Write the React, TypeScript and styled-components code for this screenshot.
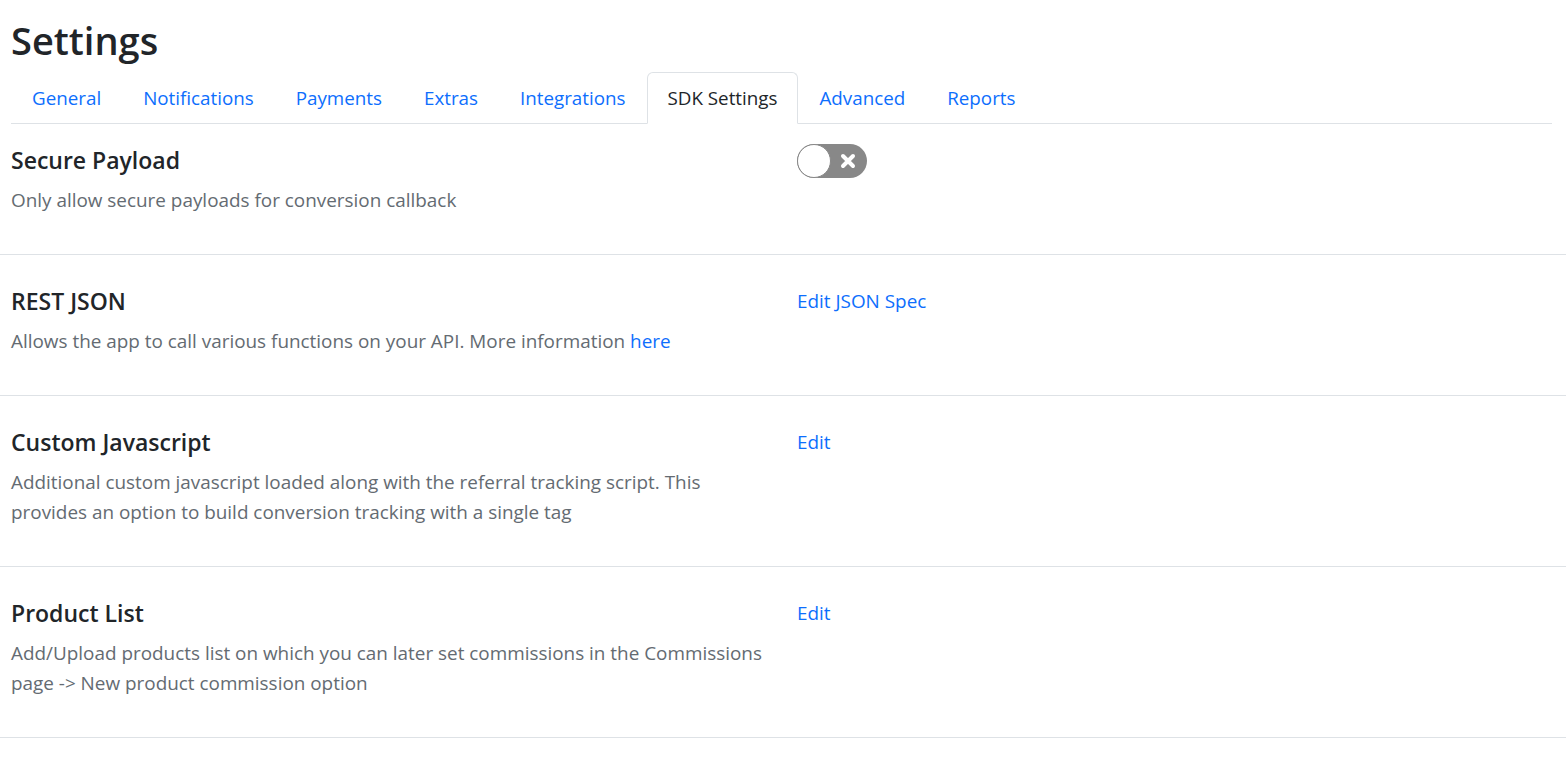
import React, { useState } from 'react';
import styled, { createGlobalStyle } from 'styled-components';

const GlobalStyle = createGlobalStyle`
  html, body {
    margin: 0;
    padding: 0;
    background: #ffffff;
  }
  body {
    font-family: "Open Sans", "Noto Sans", sans-serif;
    color: #212529;
    -webkit-font-smoothing: antialiased;
  }
  * {
    box-sizing: border-box;
  }
`;

const Page = styled.div`
  display: flex;
  flex-direction: column;
  width: 100%;
`;

const Heading = styled.h1`
  margin: 14px 0 6px 11px;
  font-size: 38px;
  line-height: 52px;
  font-weight: 600;
  color: #212529;
`;

const TabList = styled.ul`
  display: flex;
  list-style: none;
  margin: 0 14px 0 11px;
  padding: 0;
  border-bottom: 1px solid #dee2e6;
`;

const TabItem = styled.li`
  margin-bottom: -1px;
`;

const TabLink = styled.a<{ $active?: boolean }>`
  display: block;
  padding: 10px 20px;
  font-size: 18.8px;
  line-height: 30px;
  text-decoration: none;
  cursor: pointer;
  border: 1px solid ${p => (p.$active ? '#dee2e6' : 'transparent')};
  border-bottom-color: ${p => (p.$active ? '#ffffff' : 'transparent')};
  border-radius: 6px 6px 0 0;
  background: ${p => (p.$active ? '#ffffff' : 'transparent')};
  color: ${p => (p.$active ? '#212529' : '#0d6efd')};
`;

const Section = styled.section<{ $first?: boolean }>`
  display: flex;
  padding: ${p => (p.$first ? '21px' : '31px')} 11px 19px;
  border-bottom: 1px solid #dee2e6;
`;

const Info = styled.div`
  width: 786px;
  flex-shrink: 0;
  padding-right: 20px;
`;

const Title = styled.h5`
  margin: 0 0 10px;
  font-size: 23px;
  line-height: 30px;
  font-weight: 600;
  color: #212529;
`;

const Description = styled.p`
  margin: 0 0 20px;
  font-size: 18.9px;
  line-height: 30px;
  color: #646b72;
`;

const Action = styled.div`
  display: flex;
  align-items: flex-start;
`;

const ActionLink = styled.a`
  font-size: 18.9px;
  line-height: 30px;
  color: #0d6efd;
  text-decoration: none;
  cursor: pointer;
`;

const InlineLink = styled.a`
  color: #0d6efd;
  text-decoration: none;
`;

const ToggleTrack = styled.button<{ $on: boolean }>`
  position: relative;
  width: 70px;
  height: 34px;
  margin-top: -1px;
  padding: 0;
  border: none;
  border-radius: 17px;
  background: ${p => (p.$on ? '#0d6efd' : '#888888')};
  cursor: pointer;
`;

const ToggleKnob = styled.span<{ $on: boolean }>`
  position: absolute;
  top: 0;
  left: ${p => (p.$on ? '36px' : '0')};
  width: 34px;
  height: 34px;
  border-radius: 50%;
  background: #ffffff;
  border: 1.5px solid #888888;
`;

const ToggleIcon = styled.svg`
  position: absolute;
  top: 9px;
  right: 11px;
`;

function Toggle() {
  const [on, setOn] = useState(false);
  return (
    <ToggleTrack $on={on} onClick={() => setOn(!on)} aria-label="Secure payload">
      <ToggleKnob $on={on} />
      {!on && (
        <ToggleIcon width="16" height="16" viewBox="0 0 16 16">
          <path d="M3 3 L13 13 M13 3 L3 13" stroke="#ffffff" strokeWidth="4" strokeLinecap="round" />
        </ToggleIcon>
      )}
    </ToggleTrack>
  );
}

const tabs = ['General', 'Notifications', 'Payments', 'Extras', 'Integrations', 'SDK Settings', 'Advanced', 'Reports'];

export default function App() {
  return (
    <Page>
      <GlobalStyle />
      <Heading>Settings</Heading>
      <TabList>
        {tabs.map(t => (
          <TabItem key={t}>
            <TabLink $active={t === 'SDK Settings'}>{t}</TabLink>
          </TabItem>
        ))}
      </TabList>

      <Section $first>
        <Info>
          <Title>Secure Payload</Title>
          <Description>Only allow secure payloads for conversion callback</Description>
        </Info>
        <Action>
          <Toggle />
        </Action>
      </Section>

      <Section>
        <Info>
          <Title>REST JSON</Title>
          <Description>
            Allows the app to call various functions on your API. More information <InlineLink>here</InlineLink>
          </Description>
        </Info>
        <Action>
          <ActionLink>Edit JSON Spec</ActionLink>
        </Action>
      </Section>

      <Section>
        <Info>
          <Title>Custom Javascript</Title>
          <Description>
            Additional custom javascript loaded along with the referral tracking script. This provides an option to build conversion tracking with a single tag
          </Description>
        </Info>
        <Action>
          <ActionLink>Edit</ActionLink>
        </Action>
      </Section>

      <Section>
        <Info>
          <Title>Product List</Title>
          <Description>
            Add/Upload products list on which you can later set commissions in the Commissions page -&gt; New product commission option
          </Description>
        </Info>
        <Action>
          <ActionLink>Edit</ActionLink>
        </Action>
      </Section>
    </Page>
  );
}
